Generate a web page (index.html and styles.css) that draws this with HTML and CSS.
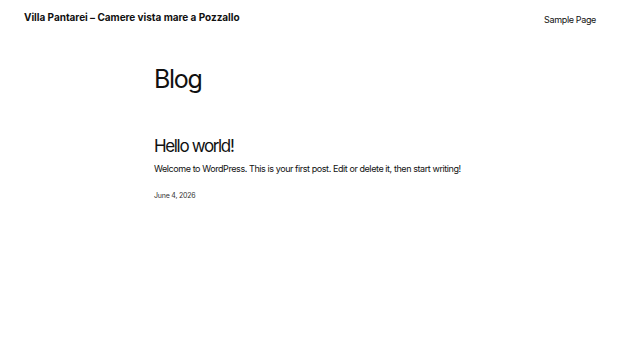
FILE: index.html
```html
<!DOCTYPE html>
<html lang="it">
<head>
  <meta charset="UTF-8">
  <meta name="viewport" content="width=device-width, initial-scale=1">
  <title>Blog – Villa Pantarei</title>
  <link rel="stylesheet" href="styles.css">
</head>
<body>
  <header class="site-header">
    <a class="site-title" href="#">Villa Pantarei – Camere vista mare a Pozzallo</a>
    <nav class="site-nav">
      <a href="#">Sample Page</a>
    </nav>
  </header>

  <main class="content">
    <h1 class="page-title">Blog</h1>

    <article class="post">
      <h2 class="post-title"><a href="#">Hello world!</a></h2>
      <p class="post-excerpt">Welcome to WordPress. This is your first post. Edit or delete it, then start writing!</p>
      <time class="post-date" datetime="2026-06-04">June 4, 2026</time>
    </article>
  </main>
</body>
</html>
```

FILE: styles.css
```css
body {
  margin: 0;
  padding: 0;
  background-color: #fff;
  color: #111;
  font-family: Inter, "Noto Sans", sans-serif;
}
a {
  color: inherit;
  text-decoration: none;
}
.site-header {
  display: flex;
  justify-content: space-between;
  align-items: center;
  padding: 10px 24px 0 24px;
  height: 14px;
}
.site-title {
  font-size: 10px;
  font-weight: 700;
  letter-spacing: -0.03px;
}
.site-nav a {
  font-size: 9px;
  letter-spacing: -0.35px;
}
.content {
  width: 312px;
  margin: 0 auto;
  padding-top: 40px;
}
.page-title {
  margin: 0;
  font-size: 25px;
  font-weight: 400;
  letter-spacing: -1.3px;
  line-height: 1.2;
}
.post {
  margin-top: 42px;
}
.post-title {
  margin: 0;
  font-size: 17px;
  font-weight: 400;
  letter-spacing: -1.35px;
  line-height: 1.2;
}
.post-excerpt {
  margin: 7px -20px 0 0;
  font-size: 9px;
  letter-spacing: -0.42px;
  line-height: 1.4;
}
.post-date {
  display: block;
  margin-top: 15px;
  font-size: 7px;
  color: #333;
  letter-spacing: -0.2px;
}
```
